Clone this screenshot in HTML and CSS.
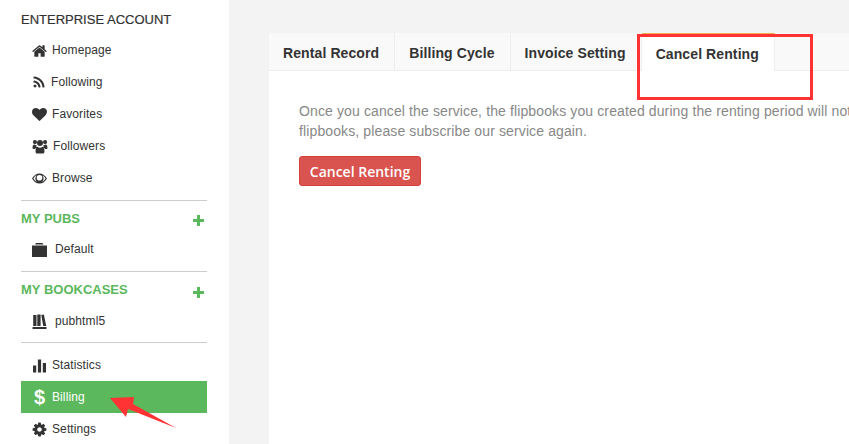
FILE: index.html
```html
<!DOCTYPE html>
<html lang="en">
<head>
<meta charset="utf-8">
<title>Billing</title>
<link rel="stylesheet" href="styles.css">
</head>
<body>
<div class="page">
  <aside class="sidebar">
    <div class="account">ENTERPRISE ACCOUNT</div>
    <ul class="nav">
      <li class="item"><svg class="ic w15" viewBox="60 130 1672 1410"><path d="M1472 992v480q0 26-19 45t-45 19h-384v-384H768v384H384q-26 0-45-19t-19-45V992q0-1 .5-3t.5-3l575-474 575 474q1 2 1 6zm223-69l-62 74q-8 9-21 11h-3q-13 0-21-7L896 424l-692 577q-12 8-24 7-13-2-21-11l-62-74q-8-10-7-23.500t11-21.500l719-599q32-26 76-26t76 26l244 204V288q0-14 9-23t23-9h192q14 0 23 9t9 23v408l219 182q10 8 11 21.500t-7 23.500z"/></svg>Homepage</li>
      <li class="item"><svg class="ic w14" viewBox="0 0 1792 1792"><path d="M576 1344q0 80-56 136t-136 56-136-56-56-136 56-136 136-56 136 56 56 136zm512 123q2 28-17 48-18 21-47 21H889q-25 0-43-16.500t-20-41.500q-22-229-184.500-391.500T250 902q-25-2-41.500-20T192 839V704q0-29 21-47 17-17 43-17h5q160 13 306 80.500T826 902q114 113 181.500 259t80.500 306zm512 2q2 27-18 47-18 20-46 20h-143q-26 0-44.500-17.500T1329 1476q-12-215-101-408.500t-231.500-336-336-231.500T252 398q-25-1-42.500-19.500T192 335V192q0-28 20-46 18-18 44-18h3q262 13 501.500 120T1186 542q187 186 294 425.500T1600 1469z"/></svg>Following</li>
      <li class="item"><svg class="ic w15" viewBox="0 0 1792 1792"><path d="M896 1664q-26 0-44-18l-624-602q-10-8-27.500-26T145 952.500 77 855 23.500 734 0 596q0-220 127-344t351-124q62 0 126.500 21.500t120 58T820 276t76 68q36-36 76-68t95.500-68.500 120-58T1314 128q224 0 351 124t127 344q0 221-229 450l-623 600q-18 18-44 18z"/></svg>Favorites</li>
      <li class="item"><svg class="ic w16" viewBox="0 0 16 16"><circle cx="2.600" cy="3.300" r="2.200"/><circle cx="13.400" cy="3.300" r="2.200"/><circle cx="8" cy="4.300" r="3.200"/><path d="M0 9.800c0-2.800.7-4 2-4 .7.500 1.400.7 2.200.7-.2.800-.1 1.800.4 2.600-.9.200-1.500.7-1.900 1.500H1.200C.4 10.600 0 10.400 0 9.800zM16 9.800c0-2.800-.7-4-2-4-.7.500-1.400.7-2.200.7.200.800.1 1.800-.4 2.600.9.200 1.500.7 1.900 1.500h1.500c.8 0 1.200-.2 1.200-.8zM3.200 13.300c0-3 .9-4.800 2.200-5 .8.600 1.600.9 2.600.9s1.800-.3 2.600-.9c1.300.2 2.200 2 2.200 5 0 1.200-.7 2.200-1.800 2.200H5c-1.100 0-1.800-1-1.800-2.200z"/></svg>Followers</li>
      <li class="item"><svg class="ic w15" viewBox="0 0 16 16"><path fill-rule="evenodd" d="M0 8c1.800-3.200 4.700-5.400 8-5.400S14.200 4.800 16 8c-1.800 3.200-4.700 5.400-8 5.400S1.800 11.200 0 8zm1.500 0c.9 1.600 2.200 2.800 3.700 3.500C4.200 10.600 3.600 9.400 3.600 8s.6-2.600 1.500-3.500C3.600 5.200 2.400 6.400 1.500 8zm9.300 3.500c1.500-.7 2.800-1.900 3.700-3.500-.9-1.600-2.100-2.800-3.600-3.500.9.900 1.500 2.100 1.500 3.500s-.6 2.600-1.600 3.500zM5 7.200a3 3 0 1 0 6 0 3 3 0 1 0-6 0z"/></svg>Browse</li>
    </ul>
    <div class="rule"></div>
    <div class="group-head"><span>MY PUBS</span><span class="plus"></span></div>
    <ul class="nav">
      <li class="item wide"><svg class="ic w15" viewBox="0 0 15 15"><path d="M0 3.500h15V15H0z"/><path d="M4 1h6.500l1 1.500H3z"/></svg>Default</li>
    </ul>
    <div class="rule"></div>
    <div class="group-head tall"><span>MY BOOKCASES</span><span class="plus"></span></div>
    <ul class="nav">
      <li class="item wide"><svg class="ic w15" viewBox="0 0 15 15"><path d="M1.200 1h3.300v11H1.200zM5.300 .5h3.300V12H5.300zM9.300 1l2.600-.5L14.200 12h-3zM.5 13h14v2H.5z"/></svg>pubhtml5</li>
    </ul>
    <div class="rule last"></div>
    <ul class="nav">
      <li class="item"><svg class="ic w15" viewBox="0 0 15 14"><path d="M1 7h3.200v7H1zM5.900 1h3.200v13H5.900zM10.800 4.500H14V14h-3.200z"/></svg>Statistics</li>
      <li class="item active"><span class="dollar">$</span>Billing</li>
      <li class="item"><svg class="ic w15" viewBox="60 60 1672 1672"><path d="M1152 896q0-106-75-181t-181-75-181 75-75 181 75 181 181 75 181-75 75-181zm512-109v222q0 12-8 23t-20 13l-185 28q-19 54-39 91 35 50 107 138 10 12 10 25t-9 23q-27 37-99 108t-94 71q-12 0-26-9l-138-108q-44 23-91 38-16 136-29 186-7 28-36 28H785q-14 0-24.500-8.500T749 1634l-28-184q-49-16-90-37l-141 107q-10 9-25 9-14 0-25-11-126-114-165-168-7-10-7-23 0-12 8-23 15-21 51-66.500t54-70.500q-27-50-41-99l-183-27q-13-2-21-12.500t-8-23.500V783q0-12 8-23t19-13l186-28q14-46 39-92-40-57-107-138-10-12-10-24 0-10 9-23 26-36 98.500-107.500T465 263q13 0 26 10l138 107q44-23 91-38 16-136 29-186 7-28 36-28h222q14 0 24.500 8.500T1043 158l28 184q49 16 90 37l142-107q9-9 24-9 13 0 25 10 129 119 165 170 7 8 7 22 0 12-8 23-15 21-51 66.500t-54 70.500q26 50 41 98l183 28q13 2 21 12.500t8 23.500z"/></svg>Settings</li>
    </ul>
  </aside>
  <main class="main">
    <section class="panel">
      <nav class="tabs">
        <div class="tab">Rental Record</div>
        <div class="tab">Billing Cycle</div>
        <div class="tab">Invoice Setting</div>
        <div class="tab current">Cancel Renting</div>
      </nav>
      <div class="body">
        <p class="note"><span class="line">Once you cancel the service, the flipbooks you created during the renting period will not</span><span class="line">flipbooks, please subscribe our service again.</span></p>
        <button class="btn" type="button">Cancel Renting</button>
      </div>
    </section>
  </main>
  <div class="callout"></div>
  <svg class="arrow" viewBox="0 0 70 34"><polygon points="0,2 24,1 23,8 66,32 18,13 16,21"/></svg>
</div>
</body>
</html>
```
FILE: styles.css
```css
* { box-sizing: border-box; }
html, body { margin: 0; height: 100%; overflow: hidden; }
body { font-family: "Liberation Sans", Arial, sans-serif; font-size: 12px; color: #333; background: #f3f3f3; }
.page { position: relative; display: flex; width: 849px; height: 444px; overflow: hidden; }

.sidebar { flex: 0 0 229px; height: 444px; padding: 9px 22px 0 21px; background: #fff; overflow: hidden; }
.account { height: 25px; line-height: 21px; font-size: 13px; color: #333; white-space: nowrap; -webkit-text-stroke: .2px #333; }
.nav { list-style: none; margin: 0; padding: 0; }
.item { display: flex; align-items: center; height: 32px; padding-left: 11px; letter-spacing: .1px; color: #333; white-space: nowrap; }
.item .ic { margin-right: 5px; fill: #333; flex: none; height: 15px; }
.item.wide .ic { margin-right: 8px; }
.item .w14 { width: 14px; margin-right: 5px; }
.w15 { width: 15px; }
.w16 { width: 16px; }
.item.active { background: #5cb85c; color: #fff; }
.dollar { width: 15px; margin-right: 5px; font-size: 20px; font-weight: 700; text-align: center; color: #fff; }

.rule { height: 1px; margin-top: 6px; background: #ccc; }
.rule.last { margin-top: 5px; margin-bottom: 6px; }
.group-head { display: flex; justify-content: space-between; align-items: center; height: 32px; padding: 2px 3px 0 0; font-size: 13px; font-weight: 700; color: #5cb85c; }
.group-head.tall { height: 33px; }
.plus { width: 11px; height: 11px; margin-top: 5px; background: linear-gradient(#5cb85c, #5cb85c) center / 11px 3px no-repeat, linear-gradient(#5cb85c, #5cb85c) center / 3px 11px no-repeat; }

.main { flex: 1; min-width: 0; padding: 33px 0 0 40px; background: #f3f3f3; }
.panel { width: 580px; height: 411px; background: #fff; }
.tabs { display: flex; height: 38px; background: #f9f9f9; border-bottom: 1px solid #eee; }
.tab { height: 38px; padding: 0 15px 0 14px; border-right: 1px solid #eee; font-size: 14px; font-weight: 700; line-height: 40px; letter-spacing: .1px; color: #333; white-space: nowrap; }
.tab.current { background: #fff; border-top: 2px solid #f0ad4e; line-height: 38px; }
.body { padding: 30px 0 0 30px; }
.note { margin: 0 0 15px; font-size: 14px; line-height: 20px; letter-spacing: .12px; color: #888; }
.line { display: block; white-space: nowrap; }
.btn { display: block; width: 122px; height: 30px; padding: 0; background: #d9534f; border: 1px solid #d43f3a; border-radius: 3px; font-family: "Open Sans", sans-serif; font-size: 14px; font-weight: 600; color: #fff; }

.callout { position: absolute; left: 637px; top: 34px; width: 176px; height: 66px; border: 3px solid #f33; }
.arrow { position: absolute; left: 110px; top: 396px; width: 70px; height: 34px; fill: #f33; }
```
